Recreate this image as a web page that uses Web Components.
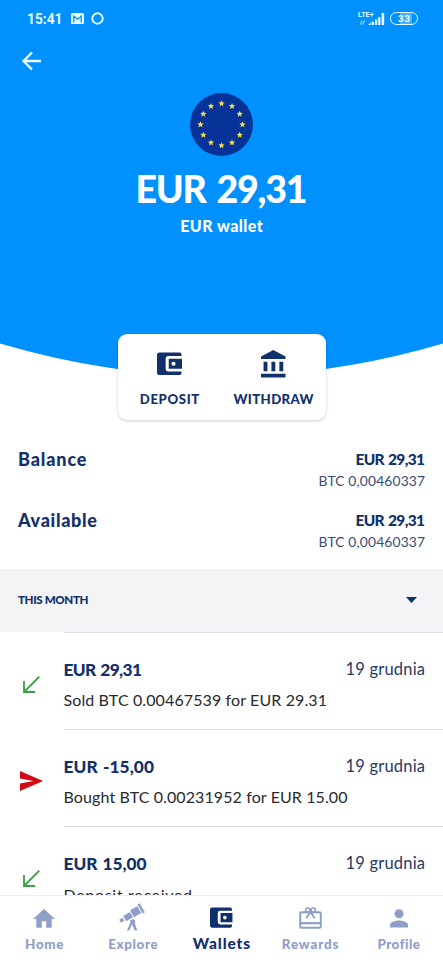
<!DOCTYPE html>
<html lang="pl">
<head>
<meta charset="utf-8">
<title>EUR wallet</title>
<style>
html, body { margin: 0; height: 960px; overflow: hidden; background: #fff; }
body { font-family: Lato, "Noto Sans", sans-serif; color: #12306b; }
</style>
</head>
<body>
<wallet-app></wallet-app>
<script>
const define = (name, html, init) => {
  const tpl = document.createElement('template');
  tpl.innerHTML = html;
  customElements.define(name, class extends HTMLElement {
    connectedCallback() {
      if (this.shadowRoot) return;
      this.attachShadow({ mode: 'open' }).append(tpl.content.cloneNode(true));
      if (init) init(this, this.shadowRoot);
    }
  });
};

// Icon set, addressed by name.
const star = (cx, cy, r) => {
  let p = '';
  for (let i = 0; i < 10; i++) {
    const a = -Math.PI / 2 + i * Math.PI / 5, q = i % 2 ? r * 0.45 : r;
    p += (i ? 'L' : 'M') + (cx + q * Math.cos(a)).toFixed(2) + ' ' + (cy + q * Math.sin(a)).toFixed(2);
  }
  return p + 'Z';
};
let stars = '';
for (let i = 0; i < 12; i++) stars += star(31.5 + 21 * Math.sin(i * Math.PI / 6), 31.5 - 21 * Math.cos(i * Math.PI / 6), 3.3);

const ICONS = {
  wallet: [24, 24, '<path fill="currentColor" fill-rule="evenodd" d="M2.2.5H22a2 2 0 0 1 2 2V4H11.2A2.7 2.7 0 0 0 8.500 6.700V16.300A2.700 2.700 0 0 0 11.200 19H24v1.500a2 2 0 0 1-2 2H2.200A2.200 2.200 0 0 1 0 20.300V2.700A2.200 2.200 0 0 1 2.200.5zM11.500 6.500H24.500V16.500H11.500zM16.200 9.500a2 2 0 1 0 .01 4 2 2 0 0 0-.01-4z"/>'],
  bank: [24, 27, '<path fill="currentColor" d="M12 0L24 6.300V8.800H0V6.300zM2.500 11.500H6.300V20.700H2.500zM10.200 11.500H14V20.700H10.200zM18 11.500H21.800V20.700H18zM0 23.200H24V27H0z"/>'],
  back: [20, 20, '<path d="M10 1.500L1.500 10 10 18.500M2 10H19" fill="none" stroke="currentColor" stroke-width="2.300"/>'],
  mail: [13, 11, '<rect width="13" height="11" rx="1.200" fill="currentColor"/><path d="M2.800 9.500V3.200L6.500 6.200 10.200 3.200V9.500" fill="none" stroke="#0091ff" stroke-width="1.300"/>'],
  ring: [13, 13, '<circle cx="6.500" cy="6.500" r="5.200" fill="none" stroke="currentColor" stroke-width="1.900"/>'],
  signal: [17, 12, '<path fill="currentColor" d="M0 12L2.800 9.500V12zM3.700 8.800H6V12H3.700zM7 6.500H9.200V12H7zM10.200 4H12.400V12H10.200zM13.600 0H16.200V12H13.600z"/>'],
  transfer: [5, 5, '<path d="M.5 4.500L2 .5M2.800 4.500L4.500 .5" stroke="currentColor" stroke-width=".9"/>'],
  flag: [63, 63, '<circle cx="31.500" cy="31.500" r="31.500" fill="#073399"/><path fill="#f3df4a" d="' + stars + '"/>'],
  incoming: [17, 17, '<path d="M16.300.7L1.500 15.500M1 5V16H12" fill="none" stroke="#3d9c45" stroke-width="1.800"/>'],
  outgoing: [23, 20, '<path fill="#d20a11" d="M0 0L23 10 0 20V12.500L13.500 10 0 7.500z"/>'],
  caret: [11, 6, '<path fill="currentColor" d="M0 0H11L5.500 6z"/>'],
  home: [22, 19, '<path fill="currentColor" d="M11 0L22 9.900H18.700V18.700H13.200V12.300H8.800V18.700H3.300V9.900H0z"/>'],
  telescope: [28, 28, '<g fill="currentColor"><g transform="rotate(-30 14 11)"><rect x="24.200" y="3.500" width="2.600" height="11"/><rect x="14.500" y="5" width="8.700" height="8.200"/><rect x="5.500" y="6.500" width="8" height="6.200"/><rect x="0" y="7.800" width="3.900" height="3.600"/></g><path d="M11.200 16.200l3.500-1.700 2.300 2.200-.6 2.200 2.500 7.600h-2.500l-3-6.600-2.600 6.600H8.200l3.600-8.300z"/></g>'],
  gift: [23, 22, '<g fill="none" stroke="currentColor" stroke-width="2"><rect x="1.200" y="5.300" width="20.600" height="15.500" rx="1.300"/><path d="M1.200 16.200H21.800" stroke-width="2.200"/><circle cx="8.800" cy="3.200" r="2.200" stroke-width="1.700"/><circle cx="14.200" cy="3.200" r="2.200" stroke-width="1.700"/><path d="M11.500 5L7.300 11.200M11.500 5L15.700 11.200" stroke-width="1.800"/></g>'],
  person: [18, 19, '<g fill="currentColor"><circle cx="9" cy="4.700" r="4.500"/><path d="M0 18.500V16C0 12.900 5.200 11.400 9 11.400S18 12.900 18 16V18.500z"/></g>']
};
define('app-icon', '<style>:host{display:block;flex:none;line-height:0}svg{display:block;overflow:visible}</style>', (el, root) => {
  const [w, h, body] = ICONS[el.getAttribute('name')];
  const width = +(el.getAttribute('size') || w);
  const holder = document.createElement('div');
  holder.innerHTML = `<svg width="${width}" height="${width * h / w}" viewBox="0 0 ${w} ${h}">${body}</svg>`;
  root.append(holder);
});

// One line of text, tracked so that it fills a given measure.
// spec: size, weight, line height, width, extra word spacing.
define('tracked-text', `<style>
  :host{display:block;flex:none;white-space:nowrap}
  span{display:inline-block;white-space:nowrap}
</style><span></span>`, (el, root) => {
  const span = root.querySelector('span');
  span.textContent = el.getAttribute('text');
  const [size, weight, line, width, word = 0] = el.getAttribute('spec').split(' ').map(Number);
  el.style.cssText += `;font-size:${size}px;font-weight:${weight};line-height:${line}px;height:${line}px;width:${width}px;word-spacing:${word}px`;
  const gap = (width - span.getBoundingClientRect().width) / (span.textContent.length - 1);
  span.style.letterSpacing = gap.toFixed(3) + 'px';
});

define('status-bar', `<style>
  :host{display:flex;align-items:center;height:37px;padding:0 25px 0 27px;color:#e9ffff}
  .time{font-family:Roboto,sans-serif}
  .mail{margin:0 7px 0 8px}
  .net{margin-left:auto;display:flex;align-items:flex-start;height:12px}
  .lte{font-family:Roboto,sans-serif;display:grid;justify-items:start;height:13px;row-gap:1px;margin:-2px -5.500px 0 0}
  .lte app-icon{margin-left:1.500px}
  .battery{box-sizing:border-box;width:28px;height:13px;border:1.500px solid;border-radius:7px;margin-left:5px;display:grid;place-items:center;background:linear-gradient(90deg,transparent 35%,#45b2ff 35% 82%,transparent 82%);font-family:Roboto,sans-serif}
</style>
<tracked-text class="time" text="15:41" spec="13.800 700 38 35.500"></tracked-text>
<app-icon class="mail" name="mail"></app-icon><app-icon name="ring"></app-icon>
<div class="net"><div class="lte"><tracked-text text="LTE+" spec="7 700 8 15.500"></tracked-text><app-icon name="transfer"></app-icon></div><app-icon name="signal"></app-icon></div>
<div class="battery"><tracked-text text="33" spec="9.500 700 10 12"></tracked-text></div>`);

define('wallet-hero', `<style>
  :host{display:grid;height:377px}
  .bg,.body{grid-area:1/1}
  .body{color:#fff;display:flex;flex-direction:column;z-index:1}
  .back{margin:14px 0 0 22px;color:#e9ffff}
  .center{display:flex;flex-direction:column;align-items:center;padding-top:22px}
  .amount{margin-top:10px}
  .name{margin-top:4px}
</style>
<svg class="bg" width="443" height="377"><path fill="#0091ff" d="M0 0H443V343.500Q221.500 409 0 343.500z"/></svg>
<div class="body"><status-bar></status-bar><app-icon class="back" name="back"></app-icon>
<div class="center"><app-icon name="flag"></app-icon>
<tracked-text class="amount" text="EUR 29,31" spec="37.500 900 46 172 3"></tracked-text>
<tracked-text class="name" text="EUR wallet" spec="16 900 20 82.500"></tracked-text></div></div>`);

define('wallet-action', `<style>
  :host{display:grid;grid-template-rows:60px 20px;align-content:start;justify-items:center;width:104px}
  .icon{display:grid;place-items:center}
</style><div class="icon"></div>`, (el, root) => {
  const a = n => el.getAttribute(n);
  const icon = root.querySelector('.icon');
  icon.innerHTML = `<app-icon name="${a('icon')}" size="24.500"></app-icon>`;
  icon.insertAdjacentHTML('afterend', `<tracked-text style="margin-top:-5px" text="${a('label')}" spec="13.200 900 20 ${a('measure')}"></tracked-text>`);
});

define('action-card', `<style>
  :host{box-sizing:border-box;display:flex;width:208px;height:86px;margin:-43px 0 0 117.500px;border-radius:9px;background:#fff;box-shadow:0 1px 3px #0003;position:relative}
</style><slot></slot>`);

define('balance-row', `<style>
  :host{display:flex;justify-content:space-between;padding:0 18px 0 18px;height:61px}
  .values{display:grid;justify-items:end;align-content:start;grid-template-rows:23px 21px}
  .btc{color:#3c4c77}
</style><slot></slot>
<div class="values"><tracked-text text="EUR 29,31" spec="15.500 900 24 69.500 1"></tracked-text><tracked-text class="btc" text="BTC 0,00460337" spec="13.800 400 22 106.500"></tracked-text></div>`);

define('month-header', `<style>
  :host{display:flex;box-sizing:border-box;align-items:center;justify-content:space-between;height:62.500px;padding:0 26px 0 18px;background:#f2f4f6}
  ::slotted(*){margin-top:-1px}
</style><slot></slot><app-icon name="caret"></app-icon>`);

define('transaction-row', `<style>
  :host{display:grid;grid-template-columns:63.500px 1fr;height:97.300px}
  .icon{display:grid;justify-items:center;align-items:center;height:105px}
  .main{border-top:1.500px solid #dedfe2;padding:25px 18px 0 0;height:70px}
  .top{display:flex;justify-content:space-between;height:30.500px}
  .date{margin-top:-1px;color:#293a66}
  .note{color:#29292d}
</style>
<div class="icon"></div><div class="main"><div class="top"></div></div>`, (el, root) => {
  const a = n => el.getAttribute(n);
  root.querySelector('.icon').innerHTML = `<app-icon name="${a('kind')}"></app-icon>`;
  root.querySelector('.top').innerHTML = `<tracked-text text="${a('amount')}" spec="17.300 900 24 ${a('amount-measure')} 1"></tracked-text>
    <tracked-text class="date" text="19 grudnia" spec="16.500 400 24 79.500"></tracked-text>`;
  root.querySelector('.main').insertAdjacentHTML('beforeend', `<tracked-text class="note" text="${a('note')}" spec="16 400 24 ${a('note-measure')}"></tracked-text>`);
});

define('nav-item', `<style>
  :host{display:grid;grid-template-rows:38px 20px;align-content:start;justify-items:center;width:88.600px;color:#8e9ec7}
  :host([active]){color:#102f6e}
  .icon{display:grid;place-items:center;height:44px}
</style><div class="icon"></div>`, (el, root) => {
  const a = n => el.getAttribute(n);
  const active = el.hasAttribute('active');
  const icon = root.querySelector('.icon');
  icon.innerHTML = `<app-icon name="${a('icon')}" size="${a('size')}"></app-icon>`;
  icon.insertAdjacentHTML('afterend', `<tracked-text text="${a('label')}" spec="${active ? 15.5 : 13.4} 900 ${active ? 18 : 20} ${a('measure')}"></tracked-text>`);
});

define('bottom-nav', `<style>
  :host{display:flex;box-sizing:border-box;height:65px;background:#fff;border-top:1px solid #ecedf0;flex:none;position:relative}
</style><slot></slot>`);

define('wallet-app', `<style>
  :host{display:flex;flex-direction:column;width:443px;height:960px;overflow:hidden;background:#fff}
  .content{height:895px;overflow:hidden;flex:none}
  .balances{padding:27px 0 0;height:122px}
</style>
<div class="content">
<wallet-hero></wallet-hero>
<action-card><wallet-action icon="wallet" label="DEPOSIT" measure="59.500"></wallet-action><wallet-action icon="bank" label="WITHDRAW" measure="80"></wallet-action></action-card>
<div class="balances">
<balance-row><tracked-text text="Balance" spec="18 900 24 68.500"></tracked-text></balance-row>
<balance-row><tracked-text text="Available" spec="18 900 24 79"></tracked-text></balance-row></div>
<month-header><tracked-text text="THIS MONTH" spec="11.600 900 20 70.500"></tracked-text></month-header>
<transaction-row kind="incoming" amount="EUR 29,31" amount-measure="78.500" note="Sold BTC 0.00467539 for EUR 29.31" note-measure="263.500"></transaction-row>
<transaction-row kind="outgoing" amount="EUR -15,00" amount-measure="90.500" note="Bought BTC 0.00231952 for EUR 15.00" note-measure="284"></transaction-row>
<transaction-row kind="incoming" amount="EUR 15,00" amount-measure="83" note="Deposit received" note-measure="128.500"></transaction-row>
</div>
<bottom-nav>
<nav-item icon="home" size="22" label="Home" measure="38.500"></nav-item>
<nav-item icon="telescope" size="27" label="Explore" measure="49.500"></nav-item>
<nav-item active icon="wallet" size="22" label="Wallets" measure="57.500"></nav-item>
<nav-item icon="gift" size="23" label="Rewards" measure="56.500"></nav-item>
<nav-item icon="person" size="18" label="Profile" measure="42.500"></nav-item>
</bottom-nav>`);
</script>
</body>
</html>
